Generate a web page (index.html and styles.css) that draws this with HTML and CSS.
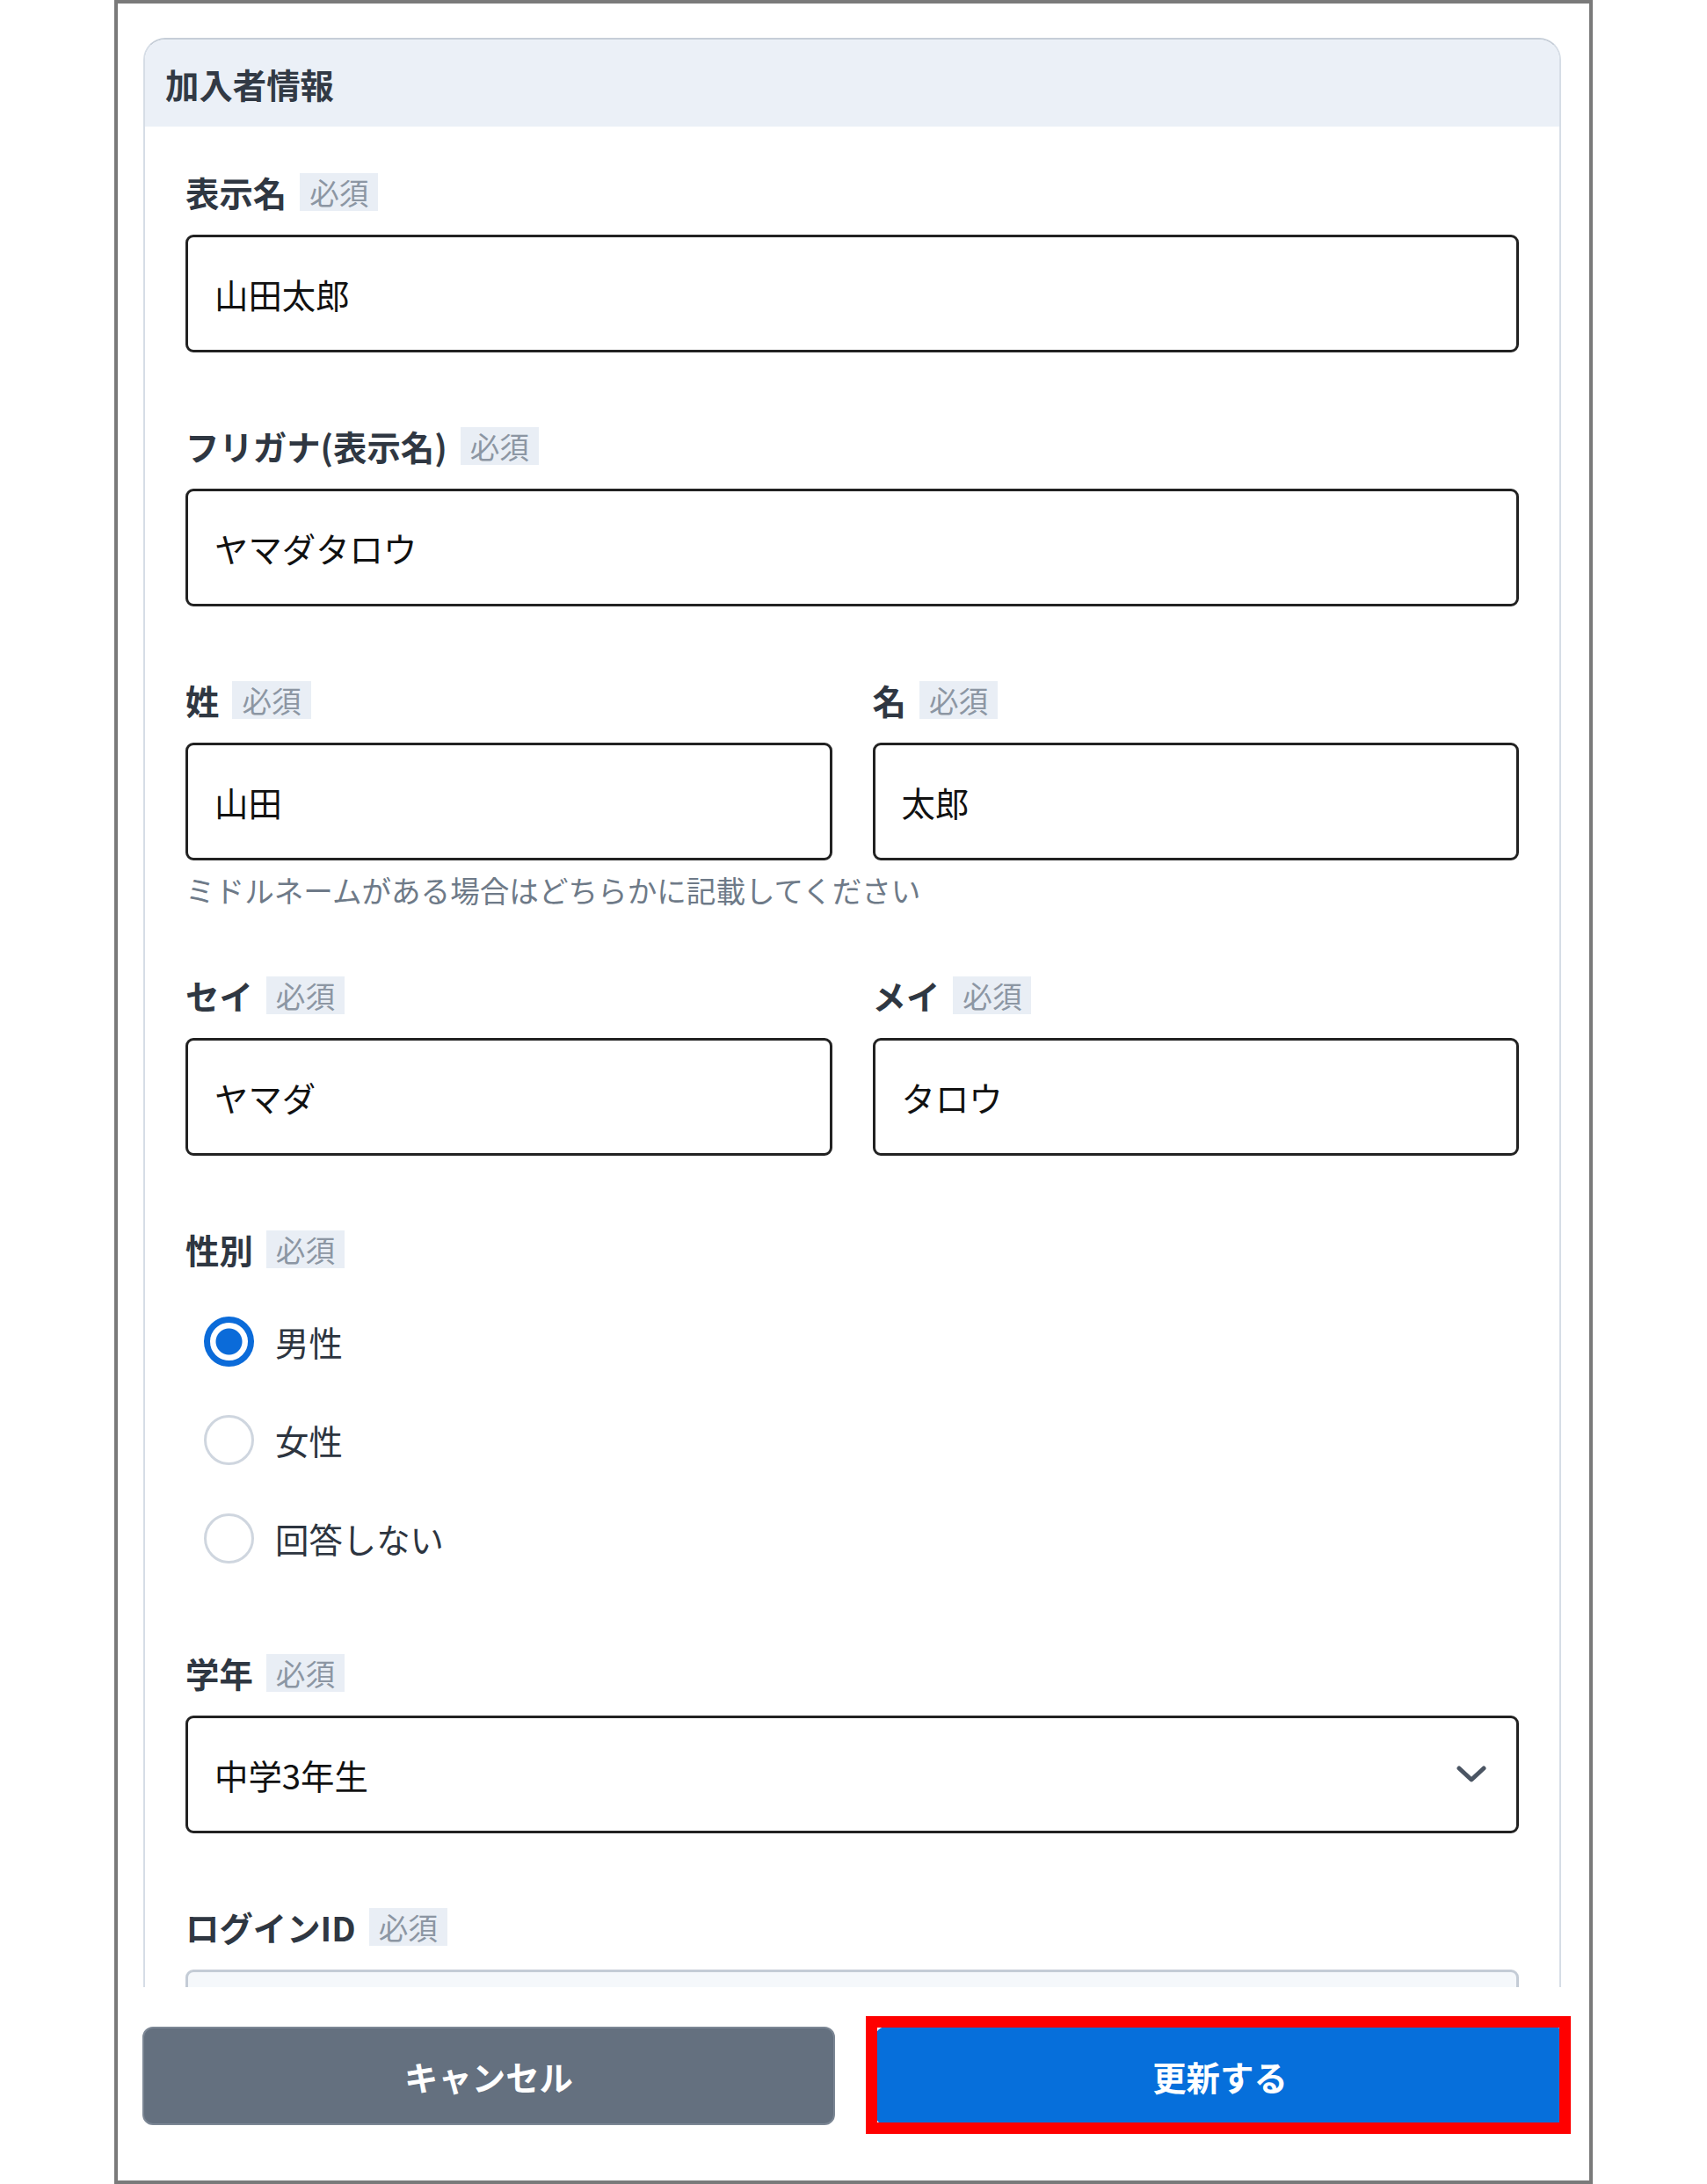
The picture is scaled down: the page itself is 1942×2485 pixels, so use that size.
FILE: index.html
```html
<!DOCTYPE html>
<html lang="ja">
<head>
<meta charset="utf-8">
<title>加入者情報</title>
<link rel="stylesheet" href="styles.css">
</head>
<body>
<div class="frame">
  <div class="scroll">
    <section class="card">
      <header class="card-head">加入者情報</header>
      <div class="card-body">
        <div class="field">
          <div class="label-row"><span class="label">表示名</span><span class="chip">必須</span></div>
          <div class="input">山田太郎</div>
        </div>
        <div class="field">
          <div class="label-row"><span class="label">フリガナ(表示名)</span><span class="chip">必須</span></div>
          <div class="input">ヤマダタロウ</div>
        </div>
        <div class="field has-help">
          <div class="pair">
            <div>
              <div class="label-row"><span class="label">姓</span><span class="chip">必須</span></div>
              <div class="input">山田</div>
            </div>
            <div>
              <div class="label-row"><span class="label">名</span><span class="chip">必須</span></div>
              <div class="input">太郎</div>
            </div>
          </div>
          <p class="help">ミドルネームがある場合はどちらかに記載してください</p>
        </div>
        <div class="field">
          <div class="pair">
            <div>
              <div class="label-row"><span class="label">セイ</span><span class="chip">必須</span></div>
              <div class="input">ヤマダ</div>
            </div>
            <div>
              <div class="label-row"><span class="label">メイ</span><span class="chip">必須</span></div>
              <div class="input">タロウ</div>
            </div>
          </div>
        </div>
        <div class="field radio-field">
          <div class="label-row"><span class="label">性別</span><span class="chip">必須</span></div>
          <ul class="radios">
            <li class="radio"><span class="dot checked"></span><span>男性</span></li>
            <li class="radio"><span class="dot"></span><span>女性</span></li>
            <li class="radio"><span class="dot"></span><span>回答しない</span></li>
          </ul>
        </div>
        <div class="field">
          <div class="label-row"><span class="label">学年</span><span class="chip">必須</span></div>
          <div class="input select">
            <span>中学3年生</span>
            <svg class="chev" width="34" height="20" viewBox="0 0 34 20"><polyline points="3,3 17,16 31,3" fill="none" stroke="#4b5563" stroke-width="5" stroke-linecap="round" stroke-linejoin="round"/></svg>
          </div>
        </div>
        <div class="field">
          <div class="label-row"><span class="label">ログインID</span><span class="chip">必須</span></div>
          <div class="input disabled"></div>
        </div>
      </div>
    </section>
  </div>
  <footer class="footer">
    <button class="btn btn-cancel">キャンセル</button>
    <button class="btn btn-primary">更新する</button>
  </footer>
</div>
</body>
</html>
```
FILE: styles.css
```css
* { box-sizing: border-box; }
html, body { margin: 0; padding: 0; background: #ffffff; }
body {
  font-family: "Noto Sans CJK JP", "Noto Sans", sans-serif;
  color: #2f3742;
  width: 1942px;
  height: 2485px;
  overflow: hidden;
}
.frame {
  margin-left: 130px;
  width: 1682px;
  height: 2485px;
  border: 4px solid #7a7a7a;
  background: #fff;
  display: flex;
  flex-direction: column;
}
.scroll {
  height: 2257px;
  overflow: hidden;
  padding: 39px 32px 0 29px;
  flex: none;
}
.card {
  border: 2px solid #d6dde6;
  border-top-color: #c6ced8;
  border-radius: 25px 25px 0 0;
  background: #fff;
}
.card-head {
  height: 99px;
  background: #ebf0f7;
  border-radius: 23px 23px 0 0;
  padding-left: 23px;
  display: flex;
  align-items: center;
  font-size: 38.4px;
  font-weight: 700;
  color: #323a45;
}
.card-body {
  padding: 52px 46px 200px 46px;
}
.field { margin-bottom: 84px; }
.field.has-help { margin-bottom: 75px; }
.field.radio-field { margin-bottom: 75px; }
.label-row {
  display: flex;
  align-items: center;
  height: 44px;
  gap: 15px;
  margin-bottom: 27px;
}
.label {
  font-size: 38.4px;
  font-weight: 700;
  line-height: 44px;
  color: #2f3742;
}
.chip {
  background: #e9eef5;
  color: #8c96a3;
  font-size: 33.6px;
  line-height: 43px;
  height: 43px;
  padding: 0 11px;
}
.input {
  height: 134px;
  border: 3px solid #222;
  border-radius: 9px;
  padding: 0 30px;
  display: flex;
  align-items: center;
  font-size: 38.4px;
  color: #111;
  background: #fff;
}
.input.disabled {
  background: #f5f8fb;
  border-color: #c4ccd6;
}
.select { justify-content: space-between; padding-right: 34px; }
.chev { display: block; }
.pair {
  display: grid;
  grid-template-columns: 1fr 1fr;
  column-gap: 46px;
}
.help {
  margin: 12px 0 0 0;
  font-size: 33.6px;
  line-height: 44px;
  color: #6e7a88;
}
.radios {
  list-style: none;
  margin: 0;
  padding: 0;
}
.radio {
  height: 112px;
  display: flex;
  align-items: center;
  padding-left: 21px;
  gap: 24px;
  font-size: 38.4px;
  color: #2d3540;
}
.dot {
  width: 57px;
  height: 57px;
  border-radius: 50%;
  border: 3px solid #cfd6df;
  background: #fff;
  flex: none;
}
.dot.checked {
  border: 7px solid #0b6bd9;
  background: radial-gradient(circle, #0b6bd9 0, #0b6bd9 14.5px, #fff 15.5px);
}
.footer {
  flex: 1;
  display: flex;
  gap: 46px;
  padding: 45px 28px 0 28px;
}
.btn {
  flex: 1;
  height: 112px;
  border: none;
  font-family: "Noto Sans CJK JP", "Noto Sans", sans-serif;
  font-size: 38.4px;
  font-weight: 700;
  color: #fff;
  position: relative;
}
.btn-cancel {
  background: #64707f;
  border-radius: 12px;
  border: 2px solid #7b8694;
}
.btn-primary {
  background: #066fdb;
  border-radius: 12px;
}
.btn-primary::after {
  content: "";
  position: absolute;
  top: -12px;
  left: -11px;
  right: -7px;
  bottom: -10px;
  border: 13px solid #ff0000;
}
```
